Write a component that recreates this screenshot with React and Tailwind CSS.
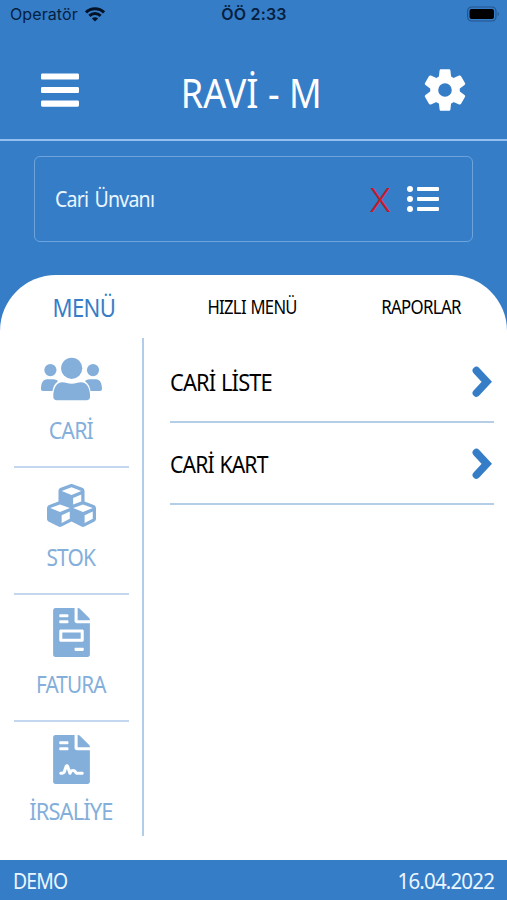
import React, { useState } from 'react';
import { FaBars, FaListUl, FaCubes, FaFileInvoice, FaFileContract } from 'react-icons/fa';

const UsersIcon = ({ className }) => (
  <svg className={className} viewBox="0 -3.5 61 49" fill="currentColor" aria-hidden="true">
    <circle cx="30.7" cy="10.8" r="10.6" />
    <circle cx="9.4" cy="12.6" r="6.1" />
    <circle cx="52" cy="12.6" r="6.1" />
    <path d="M15.9 42.8c-2.3 0-3.6-1.3-3.6-3.5 0-8.8 3.2-14.5 9.2-14.5 3 0 5.6 1.4 9.2 1.4s6.2-1.4 9.2-1.4c6 0 9.2 5.7 9.2 14.5 0 2.2-1.3 3.5-3.6 3.5z" />
    <path d="M2 33.6c-1.3 0-2-.7-2-2C0 25.4 2.2 21.8 6 21.8h6.4c1.8 0 3.4.7 4.6 1.9-3.4 2.4-5 5.7-5.5 9.9z" />
    <path d="M59 33.6c1.3 0 2-.7 2-2 0-6.2-2.2-9.8-6-9.8h-6.4c-1.8 0-3.4.7-4.6 1.9 3.4 2.4 5 5.7 5.5 9.9z" />
  </svg>
);

const GearIcon = ({ className }) => (
  <svg className={className} viewBox="-21 -21 42 42" fill="currentColor" aria-hidden="true">
    <circle r="10.8" fill="none" stroke="currentColor" strokeWidth="8" />
    {[0, 60, 120, 180, 240, 300].map((angle) => (
      <path
        key={angle}
        transform={`rotate(${angle})`}
        d="M-6.2-12.8-5.4-19.4c.1-.9.6-1.4 1.5-1.4h7.8c.9 0 1.4.5 1.5 1.4l.8 6.6z"
      />
    ))}
  </svg>
);

const ChevronIcon = ({ className }) => (
  <svg className={className} viewBox="0 0 20 32" fill="none" stroke="currentColor" strokeWidth="7.6" strokeLinecap="round" aria-hidden="true">
    <path d="M4.4 4.6 14.8 15.8 4.4 27" />
  </svg>
);

const sections = [
  { id: 'cari', label: 'CARİ', icon: UsersIcon, iconClass: 'w-[61px]', labelClass: 'scale-x-[0.93]' },
  { id: 'stok', label: 'STOK', icon: FaCubes, iconClass: 'w-[49px]', labelClass: 'scale-x-[0.91]' },
  { id: 'fatura', label: 'FATURA', icon: FaFileInvoice, iconClass: 'w-[37px]', labelClass: 'scale-x-[0.9]' },
  { id: 'irsaliye', label: 'İRSALİYE', icon: FaFileContract, iconClass: 'w-[37px]', labelClass: 'scale-x-[0.95]' },
];

const links = [
  { id: 'liste', label: 'CARİ LİSTE', labelClass: 'scale-x-[0.95]' },
  { id: 'kart', label: 'CARİ KART', labelClass: 'scale-x-[0.92]' },
];

const StatusBar = () => (
  <div className="grid h-7 grid-cols-3 items-center pl-[10px] pr-[7px] font-['Inter',sans-serif] text-[#06203f]">
    <div className="flex items-center gap-[7px]">
      <span className="text-[16px] leading-7 tracking-[0.1px]">Operatör</span>
      <svg className="h-[15px] w-5" viewBox="0 0 20 15" fill="none" stroke="#031226" strokeWidth="3" aria-hidden="true">
        <path d="M1 5.4a12.8 12.8 0 0 1 18 0" />
        <path d="M4.4 8.9a8 8 0 0 1 11.2 0" />
        <path d="M10 14.6 6.9 11.5a4.4 4.4 0 0 1 6.2 0z" fill="#031226" stroke="none" />
      </svg>
    </div>
    <span className="-translate-x-px text-center text-[16px] font-semibold leading-7 tracking-[0.2px]">ÖÖ 2:33</span>
    <svg className="h-4 w-[33px] justify-self-end" viewBox="0 0 33 16" aria-hidden="true">
      <rect x="0.6" y="1" width="28.4" height="14" rx="4" fill="none" stroke="#24568c" strokeWidth="1.2" />
      <rect x="2.5" y="3" width="24.5" height="10" rx="2" fill="#000" />
      <path d="M30.6 6v4c1.6-.6 1.6-3.4 0-4z" fill="#24568c" />
    </svg>
  </div>
);

const App = () => {
  const [selected, setSelected] = useState('');

  return (
    <div className="flex h-[900px] w-[507px] flex-col overflow-hidden bg-[#367dc8] font-['Noto_Sans',sans-serif]">
      <StatusBar />

      {/* Header */}
      <header className="flex h-[113px] items-center justify-between border-b-2 border-[#94c0f0] pl-[41px] pr-[41px] pt-[13px] text-white">
        <button aria-label="Menü">
          <FaBars className="h-[44px] w-[38px]" />
        </button>
        <h1 className="translate-y-[3px] scale-x-[0.9] whitespace-nowrap text-[40px] leading-[48px]">RAVİ - M</h1>
        <button aria-label="Ayarlar">
          <GearIcon className="h-[42px] w-[42px]" />
        </button>
      </header>

      {/* Account picker */}
      <div className="h-[134px] px-[34px] pt-[15px]">
        <div className="flex h-[86px] items-center justify-between rounded-md border border-[#6da4de] pl-[20px] pr-[33px]">
          <span className="origin-left scale-x-[0.87] whitespace-nowrap text-[22.5px] leading-8 tracking-[-0.04em] text-[#e9f6ff] [word-spacing:2px]">
            {selected || 'Cari Ünvanı'}
          </span>
          <div className="flex items-center gap-[16px]">
            <button
              className="translate-y-px font-['Inter',sans-serif] text-[33px] font-light leading-8 text-[#cf1527]"
              onClick={() => setSelected('')}
            >
              X
            </button>
            <FaListUl className="h-8 w-8 text-white" />
          </div>
        </div>
      </div>

      {/* Content panel */}
      <div className="flex flex-1 flex-col rounded-t-[56px] bg-white">
        <div className="grid h-[63px] grid-cols-3 items-center whitespace-nowrap pr-[2px] text-[19px] leading-8 tracking-[-0.04em] text-black">
          <span className="scale-x-[0.85] justify-self-center text-[26px] text-[#367dc8]">MENÜ</span>
          <span className="scale-x-[0.875] justify-self-center [word-spacing:1px]">HIZLI MENÜ</span>
          <span className="scale-x-[0.885] justify-self-center">RAPORLAR</span>
        </div>

        <div className="flex flex-1">
          <nav className="h-[498px] w-[144px] border-r-2 border-[#b3cce8] pl-[14px] pr-[13px] pt-[3px]">
            {sections.map(({ id, label, icon: Icon, iconClass, labelClass }) => (
              <div
                key={id}
                className="flex h-[127px] flex-col items-center border-b-2 border-[#c3d7ee] pt-[13px] text-[#84afdb] last:border-b-0"
              >
                <Icon className={`h-[49px] ${iconClass}`} />
                <span className={`mr-px mt-[11px] whitespace-nowrap text-[23px] leading-8 tracking-[-0.04em] ${labelClass}`}>
                  {label}
                </span>
              </div>
            ))}
          </nav>

          <ul className="flex-1 pl-[26px] pr-[13px] pt-[3px]">
            {links.map((link) => (
              <li key={link.id} className="flex h-[82px] items-center justify-between border-b-2 border-[#b3cee6] pr-[2px] pt-[2px]">
                <span
                  className={`origin-left whitespace-nowrap text-[23px] leading-8 tracking-[-0.04em] text-black [word-spacing:1px] ${link.labelClass}`}
                >
                  {link.label}
                </span>
                <ChevronIcon className="h-8 w-5 text-[#367dc8]" />
              </li>
            ))}
          </ul>
        </div>
      </div>

      {/* Footer */}
      <footer className="flex h-10 items-center justify-between whitespace-nowrap bg-[#367dc8] px-[13px] pt-[2px] text-[22.5px] leading-8 tracking-[-0.04em] text-[#e9f6ff]">
        <span className="origin-left scale-x-[0.86]">DEMO</span>
        <span className="origin-right scale-x-[0.91]">16.04.2022</span>
      </footer>
    </div>
  );
};

export default App;
